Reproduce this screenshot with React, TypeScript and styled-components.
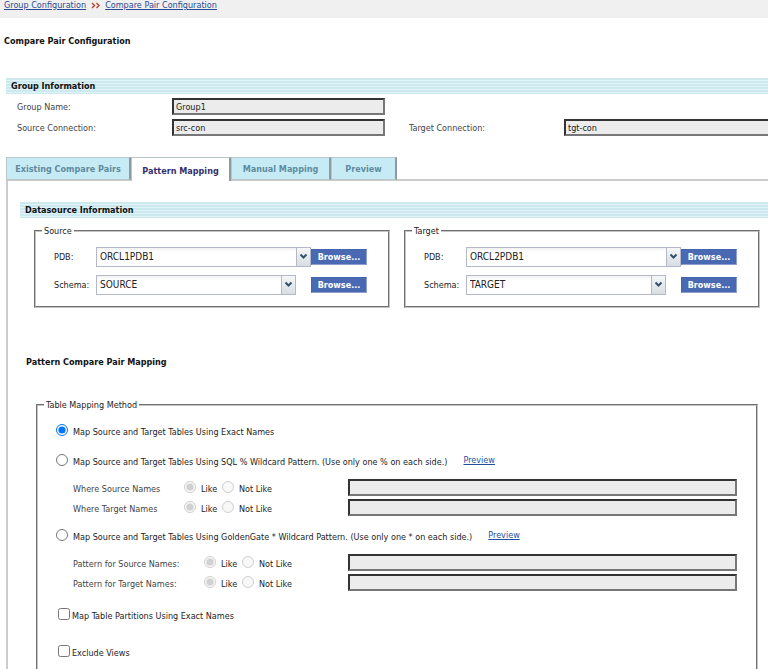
import React from "react";
import styled, { createGlobalStyle } from "styled-components";

const family = '"DejaVu Sans Condensed", Tahoma, sans-serif';

const GlobalStyle = createGlobalStyle`
  *, *::before, *::after { box-sizing: border-box; }
  body { margin: 0; background: #fff; color: #1c1c1c; font: 9px/14px ${family}; overflow-x: hidden; }
  h1, h2, h3, fieldset, input, button, select { margin: 0; }
`;

const Page = styled.div`
  display: flex;
  flex-direction: column;
  min-height: 100vh;
`;

const Breadcrumb = styled.nav`
  display: flex;
  gap: 5px;
  height: 18px;
  padding: 0 4px;
  line-height: 11px;
  background: #f0f0f0;
`;

const Crumb = styled.a`
  color: #2b4c94;
`;

const Arrows = styled.svg`
  width: 9px;
  height: 11px;
`;

const PageTitle = styled.h1`
  margin: 16px 4px 30px 4px;
  font: bold 9px/14px ${family};
  color: #111;
`;

const SectionBar = styled.h2`
  padding-left: 5px;
  font: bold 9px/16px ${family};
  color: #111;
  background: repeating-linear-gradient(#cbe9ef 0 2px, #e0f4f7 2px 3px);
`;

const GroupInfo = styled.section`
  margin-left: 6px;
`;

const InfoGrid = styled.div`
  display: grid;
  grid-template-columns: 155px minmax(0, 213px) 24px 155px minmax(0, 1fr);
  grid-auto-rows: 17px;
  row-gap: 4px;
  align-items: center;
  padding: 4px 0 0 11px;
  color: #444;
`;

const TextField = styled.input<{ $open?: boolean }>`
  width: 100%;
  min-width: 0;
  height: 17px;
  padding: 1px 2px 0;
  border: 2px solid #333;
  border-right-color: #777;
  border-bottom-color: #777;
  border-right-width: ${p => (p.$open ? "0" : "2px")};
  border-radius: 0;
  background: #ececec;
  color: #222;
  font: 9px/12px ${family};
`;

const RowStartLabel = styled.label`
  grid-column: 1;
`;

const TargetLabel = styled.label`
  grid-column: 4;
`;

const Tabs = styled.div`
  display: flex;
  height: 24px;
  margin: 21px 0 0 6px;
  border-bottom: 2px solid #cbcbcb;
`;

const Tab = styled.button<{ $active?: boolean; $width: number }>`
  width: ${p => p.$width}px;
  height: ${p => (p.$active ? 24 : 23)}px;
  padding: ${p => (p.$active ? "3px 0 0" : "1px 0 0")};
  border: 1px solid #b9c6ca;
  border-right: 2px solid #8f9a9e;
  border-bottom: ${p => (p.$active ? "0" : "1px solid #b9c6ca")};
  background: ${p => (p.$active ? "#fff" : "#c6ebf4")};
  color: ${p => (p.$active ? "#332f6b" : "#5f8ba0")};
  font: bold 9px/14px ${family};
  white-space: nowrap;
`;

const Panel = styled.main`
  display: flex;
  flex: 1;
  flex-direction: column;
  margin-left: 6px;
  padding: 21px 0 0 12px;
  border-left: 2px solid #cbcbcb;
`;

const Sources = styled.div`
  display: grid;
  grid-template-columns: 1fr 1fr;
  gap: 14px;
  margin: 6px 8px 0 14px;
`;

const Group = styled.fieldset`
  min-width: 0;
  padding: 0 0 7px 18px;
  border: 2px groove #c4c4c4;
`;

const Legend = styled.legend`
  margin-left: -12px;
  padding: 0 2px;
`;

const SourceRow = styled.div`
  display: grid;
  grid-template-columns: 42px 215px 56px;
  align-items: center;
  height: 28px;

  &:first-of-type { margin-top: 5px; }
`;

const Combo = styled.div<{ $short?: boolean }>`
  display: grid;
  width: ${p => (p.$short ? "200px" : "215px")};
  height: 20px;

  > * { grid-area: 1 / 1; }
`;

const Select = styled.select`
  appearance: none;
  width: 100%;
  height: 20px;
  padding: 0 18px 0 3px;
  border: 1px solid #b5b8c8;
  border-radius: 0;
  background: linear-gradient(#f1f1f1, #fff 4px);
  color: #222;
  font: 10px/18px ${family};
`;

const Trigger = styled.svg`
  justify-self: end;
  width: 15px;
  height: 20px;
  border: 1px solid #b5b8c8;
  background: linear-gradient(#f5f7f9, #d7dde3);
  pointer-events: none;
`;

const Browse = styled.button`
  height: 16px;
  padding: 0;
  border: 1px solid #8fa0cc;
  border-top-color: #4565b0;
  border-left-color: #4565b0;
  background: #4969b2;
  color: #fff;
  font: bold 9px/13px ${family};
`;

const MappingTitle = styled.h3`
  margin: 47px 0 29px 6px;
  font: bold 9px/14px ${family};
  color: #111;
`;

const MappingGroup = styled(Group)`
  flex: 1;
  margin: 0 10px 0 16px;
  padding: 0 19px 0 18px;
  border-bottom: 0;
`;

const Option = styled.div<{ $space?: number; $indent?: number }>`
  display: flex;
  align-items: center;
  height: 24px;
  margin-top: ${p => p.$space ?? 6}px;
  margin-left: ${p => p.$indent ?? 0}px;
`;

const Choice = styled.input`
  flex: none;
  width: 12px;
  height: 12px;
`;

const ChoiceLabel = styled.label<{ $gap?: number }>`
  padding-top: 3px;
  margin-left: ${p => p.$gap ?? 5}px;
  white-space: nowrap;
`;

const PreviewLink = styled.a`
  margin-left: 16px;
  color: #1f4fa0;
`;

const Patterns = styled.div`
  margin: 5px 0 0 17px;
`;

const PatternRow = styled.div<{ $label: number }>`
  display: grid;
  grid-template-columns: ${p => p.$label}px 38px ${p => 237 - p.$label}px minmax(0, 1fr);
  align-items: center;
  height: 20px;
`;

const PatternLabel = styled.span`
  padding-top: 4px;
  color: #444;
`;

const Inline = styled.span`
  display: flex;
  align-items: center;
`;

function Chevron() {
  return (
    <Trigger viewBox="0 0 13 18" aria-hidden="true">
      <path d="M3.5 6.5 6.5 9.5 9.5 6.5" fill="none" stroke="#34516b" strokeWidth="2" />
    </Trigger>
  );
}

function Datasource({ name, pdb, schema }: { name: string; pdb: string; schema: string }) {
  const id = name.toLowerCase();
  return (
    <Group>
      <Legend>{name}</Legend>
      <SourceRow>
        <label htmlFor={`${id}-pdb`}>PDB:</label>
        <Combo>
          <Select id={`${id}-pdb`}><option>{pdb}</option></Select>
          <Chevron />
        </Combo>
        <Browse type="button">Browse...</Browse>
      </SourceRow>
      <SourceRow>
        <label htmlFor={`${id}-schema`}>Schema:</label>
        <Combo $short>
          <Select id={`${id}-schema`}><option>{schema}</option></Select>
          <Chevron />
        </Combo>
        <Browse type="button">Browse...</Browse>
      </SourceRow>
    </Group>
  );
}

function Pattern({ id, label, width }: { id: string; label: string; width: number }) {
  return (
    <PatternRow $label={width} role="group" aria-labelledby={`${id}-label`}>
      <PatternLabel id={`${id}-label`}>{label}</PatternLabel>
      <Inline>
        <Choice type="radio" name={id} id={`${id}-like`} defaultChecked disabled />
        <ChoiceLabel htmlFor={`${id}-like`}>Like</ChoiceLabel>
      </Inline>
      <Inline>
        <Choice type="radio" name={id} id={`${id}-not`} disabled />
        <ChoiceLabel htmlFor={`${id}-not`}>Not Like</ChoiceLabel>
      </Inline>
      <TextField aria-labelledby={`${id}-label`} readOnly />
    </PatternRow>
  );
}

export default function App() {
  return (
    <>
      <GlobalStyle />
      <Page>
        <Breadcrumb>
          <Crumb href="#group">Group Configuration</Crumb>
          <Arrows viewBox="0 0 9 11" aria-hidden="true">
            <path d="M1 3 3.5 5.5 1 8M5.5 3 8 5.5 5.5 8" fill="none" stroke="#b8452c" strokeWidth="1.4" />
          </Arrows>
          <Crumb href="#pair">Compare Pair Configuration</Crumb>
        </Breadcrumb>
        <PageTitle>Compare Pair Configuration</PageTitle>
        <GroupInfo>
          <SectionBar>Group Information</SectionBar>
          <InfoGrid>
            <RowStartLabel htmlFor="group-name">Group Name:</RowStartLabel>
            <TextField id="group-name" value="Group1" readOnly />
            <RowStartLabel htmlFor="source-connection">Source Connection:</RowStartLabel>
            <TextField id="source-connection" value="src-con" readOnly />
            <TargetLabel htmlFor="target-connection">Target Connection:</TargetLabel>
            <TextField id="target-connection" value="tgt-con" readOnly $open />
          </InfoGrid>
        </GroupInfo>
        <Tabs role="tablist">
          <Tab role="tab" $width={125}>Existing Compare Pairs</Tab>
          <Tab role="tab" $width={100} $active aria-selected="true">Pattern Mapping</Tab>
          <Tab role="tab" $width={100}>Manual Mapping</Tab>
          <Tab role="tab" $width={66}>Preview</Tab>
        </Tabs>
        <Panel>
          <SectionBar>Datasource Information</SectionBar>
          <Sources>
            <Datasource name="Source" pdb="ORCL1PDB1" schema="SOURCE" />
            <Datasource name="Target" pdb="ORCL2PDB1" schema="TARGET" />
          </Sources>
          <MappingTitle>Pattern Compare Pair Mapping</MappingTitle>
          <MappingGroup>
            <Legend>Table Mapping Method</Legend>
            <Option>
              <Choice type="radio" name="method" id="exact" defaultChecked />
              <ChoiceLabel htmlFor="exact">Map Source and Target Tables Using Exact Names</ChoiceLabel>
            </Option>
            <Option>
              <Choice type="radio" name="method" id="sql" />
              <ChoiceLabel htmlFor="sql">
                Map Source and Target Tables Using SQL % Wildcard Pattern. (Use only one % on each side.)
              </ChoiceLabel>
              <PreviewLink href="#preview-sql">Preview</PreviewLink>
            </Option>
            <Patterns>
              <Pattern id="where-source" label="Where Source Names" width={111} />
              <Pattern id="where-target" label="Where Target Names" width={111} />
            </Patterns>
            <Option>
              <Choice type="radio" name="method" id="goldengate" />
              <ChoiceLabel htmlFor="goldengate">
                Map Source and Target Tables Using GoldenGate * Wildcard Pattern. (Use only one * on each side.)
              </ChoiceLabel>
              <PreviewLink href="#preview-goldengate">Preview</PreviewLink>
            </Option>
            <Patterns>
              <Pattern id="pattern-source" label="Pattern for Source Names:" width={131} />
              <Pattern id="pattern-target" label="Pattern for Target Names:" width={131} />
            </Patterns>
            <Option $space={10} $indent={2}>
              <Choice type="checkbox" id="partitions" />
              <ChoiceLabel htmlFor="partitions" $gap={2}>Map Table Partitions Using Exact Names</ChoiceLabel>
            </Option>
            <Option $space={13} $indent={2}>
              <Choice type="checkbox" id="views" />
              <ChoiceLabel htmlFor="views" $gap={2}>Exclude Views</ChoiceLabel>
            </Option>
          </MappingGroup>
        </Panel>
      </Page>
    </>
  );
}
